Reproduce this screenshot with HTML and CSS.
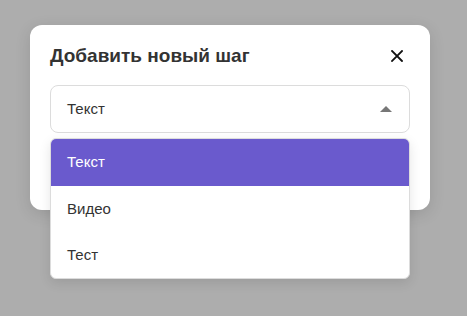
FILE: index.html
```html
<!DOCTYPE html>
<html lang="ru">
<head>
  <meta charset="UTF-8" />
  <meta name="viewport" content="width=device-width, initial-scale=1.0" />
  <title>Добавить новый шаг</title>
  <link rel="stylesheet" href="styles.css">
</head>
<body>
  <div class="overlay">
    <div class="modal">
      <div class="modal-header">
        <h2>Добавить новый шаг</h2>
        <button class="close" aria-label="Закрыть">
          <svg width="12" height="12" viewBox="0 0 12 12"><path d="M1 1L11 11M11 1L1 11" stroke="#111" stroke-width="1.8" stroke-linecap="square"/></svg>
        </button>
      </div>

      <div class="select-wrap">
        <div class="select">
          <span>Текст</span>
          <span class="arrow"></span>
        </div>
        <ul class="options">
          <li class="selected">Текст</li>
          <li>Видео</li>
          <li>Тест</li>
        </ul>
      </div>
    </div>
  </div>
</body>
</html>
```

FILE: styles.css
```css
:root {
  --overlay: #adadad;
  --primary: #6a5acd;
  --text: #333;
  --border: #dcdcdc;
}

body {
  margin: 0;
  font-family: 'Liberation Sans', Arial, sans-serif;
  background: var(--overlay);
  color: var(--text);
}

.overlay {
  min-height: 316px;
  padding: 25px 0 0 30px;
  box-sizing: border-box;
}

.modal {
  width: 400px;
  box-sizing: border-box;
  background: #fff;
  border-radius: 12px;
  padding: 20px 20px 77px;
  box-shadow: 0 4px 16px rgba(0,0,0,0.12);
}

.modal-header {
  display: flex;
  align-items: center;
  justify-content: space-between;
  margin-bottom: 18px;
}

.modal-header h2 {
  margin: 0;
  font-size: 19px;
  font-weight: 700;
  line-height: 22px;
  color: #333;
}

.close {
  background: none;
  border: none;
  padding: 0 7px 0 0;
  cursor: pointer;
  display: flex;
}

.select-wrap {
  position: relative;
}

.select {
  height: 48px;
  box-sizing: border-box;
  border: 1px solid var(--border);
  border-radius: 8px;
  display: flex;
  align-items: center;
  justify-content: space-between;
  padding: 0 17px 1px 16px;
  font-size: 15px;
}

.arrow {
  width: 0;
  height: 0;
  border-left: 6px solid transparent;
  border-right: 6px solid transparent;
  border-bottom: 6px solid #777;
}

.options {
  position: absolute;
  top: 53px;
  left: 0;
  right: 0;
  margin: 0;
  padding: 0;
  list-style: none;
  background: #fff;
  border: 1px solid var(--border);
  border-radius: 6px;
  overflow: hidden;
  box-shadow: 0 4px 12px rgba(0,0,0,0.1);
}

.options li {
  height: 46px;
  box-sizing: border-box;
  display: flex;
  align-items: center;
  padding: 0 16px 2px;
  font-size: 15px;
  color: #333;
}

.options li.selected {
  height: 47px;
  background: var(--primary);
  color: #fff;
}
```
